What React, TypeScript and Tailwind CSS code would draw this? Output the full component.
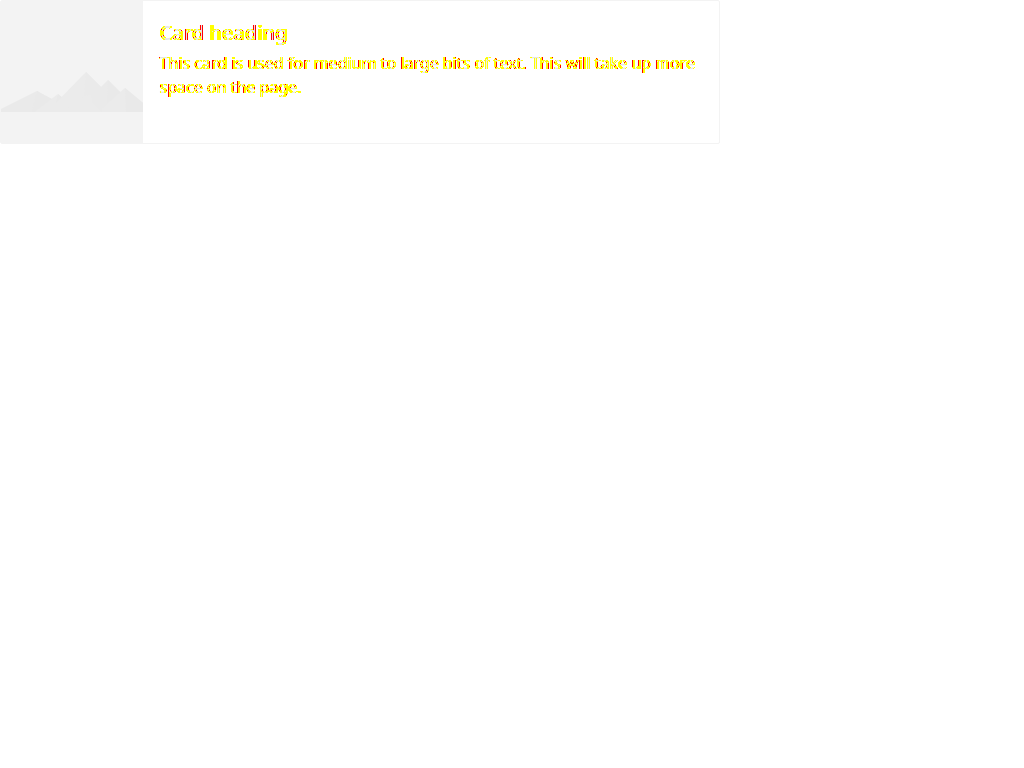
const textColors = { filter: "url(#edge-colors)" };

function EdgeColors() {
  return (
    <svg width="0" height="0" className="absolute" aria-hidden="true">
      <filter id="edge-colors" colorInterpolationFilters="sRGB" x="0" y="0" width="100%" height="100%">
        {/* Edge map: difference between the text and its copy one pixel to the right. */}
        <feColorMatrix in="SourceGraphic" values="0 0 0 1 0  0 0 0 1 0  0 0 0 1 0  0 0 0 0 1" result="base" />
        <feOffset in="SourceGraphic" dx="1" dy="0" />
        <feColorMatrix values="0 0 0 1 0  0 0 0 1 0  0 0 0 1 0  0 0 0 0 1" result="shifted" />
        <feBlend in="base" in2="shifted" mode="difference" />
        <feColorMatrix values="1 0 0 0 0  0 1 0 0 0  0 0 1 0 0  1 0 0 0 0" />
        <feComponentTransfer result="edges">
          <feFuncR type="discrete" tableValues="1 1" />
          <feFuncG type="discrete" tableValues="1 1 1 1 1 1 1 1 0 0" />
          <feFuncB type="discrete" tableValues="0 0" />
          <feFuncA type="discrete" tableValues="0 0 1 1 1 1 1 1 1 1" />
        </feComponentTransfer>
        <feFlood floodColor="#e5e5e5" />
        <feComposite in2="SourceAlpha" operator="in" result="faded" />
        <feMerge>
          <feMergeNode in="faded" />
          <feMergeNode in="edges" />
        </feMerge>
      </filter>
    </svg>
  );
}

function Mountains() {
  return (
    <svg viewBox="0 0 142 142" className="block h-full w-full" role="img" aria-label="Mountains">
      <path d="M0 108 36 90 70 110V111H0Z" fill="#eaeaea" />
      <path d="M36 90 31 111H70V108Z" fill="#e9e9e9" />
      <path d="M33 111 57 93 78 111Z" fill="#ebebeb" />
      <path d="M57 93 53 111H78Z" fill="#e9e9e9" />
      <path d="M46 111 85 71 125 111Z" fill="#ebebeb" />
      <path d="M85 71 83 95 90 94 94 111H125Z" fill="#eaeaea" />
      <path d="M60 111 85 94 101 111Z" fill="#ebebeb" />
      <path d="M98 88 107 79 140 111H101Z" fill="#eaeaea" />
      <path d="M107 79 106 100 110 111H137Z" fill="#e9e9e9" />
      <path d="M101 107 124 87 142 102V111H101Z" fill="#ebebeb" />
      <path d="M124 87 125 111H142V102Z" fill="#e9e9e9" />
    </svg>
  );
}

export default function App() {
  return (
    <main className="min-h-screen bg-white font-['Noto_Sans',sans-serif]">
      <EdgeColors />
      <article className="flex max-w-[720px] rounded-xs border border-[#f3f3f3] bg-white">
        <div className="size-[142px] shrink-0 bg-[#f3f3f3]">
          <Mountains />
        </div>
        <div className="flex flex-1 flex-col gap-0.5 p-4">
          <h2 className="text-xl leading-8 font-medium text-black" style={textColors}>Card heading</h2>
          <p className="text-base leading-6 text-black" style={textColors}>
            This card is used for medium to large bits of text. This will take up more space on the page.
          </p>
        </div>
      </article>
    </main>
  );
}
